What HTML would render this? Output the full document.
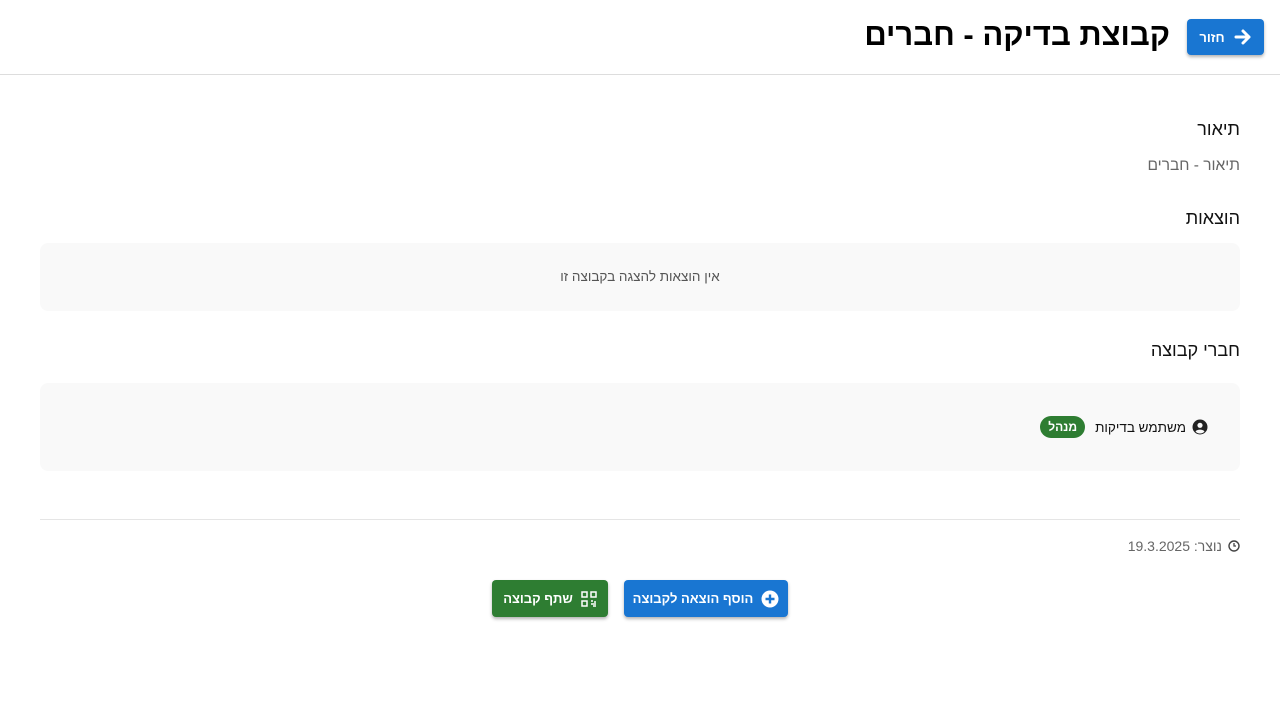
<!DOCTYPE html>
<html dir="rtl"><head><meta charset="utf-8"><style>
*{box-sizing:border-box;margin:0;padding:0}
body{width:1280px;height:720px;background:#fff;font-family:"Liberation Sans","Noto Sans CJK SC",sans-serif;color:#111;position:relative;overflow:hidden}
.hdr{position:absolute;top:0;left:0;right:0;height:75px;border-bottom:1px solid #ddd}
.back{position:absolute;right:16px;top:19px;width:77px;height:36px;background:#1976d2;border-radius:4px;color:#fff;font-weight:bold;font-size:13px;box-shadow:0 2px 3px rgba(0,0,0,.3);display:flex;align-items:center;justify-content:center;gap:9px}
h1{position:absolute;right:110px;top:17px;font-size:31px;font-weight:bold;color:#000}
.ab{position:absolute;right:40px}
h2{font-size:18px;font-weight:normal;color:#111}
.box{position:absolute;left:40px;right:40px;background:#f9f9f9;border-radius:8px}
.btn{position:absolute;top:580px;height:37px;border-radius:4px;color:#fff;font-weight:bold;font-size:13px;display:flex;align-items:center;justify-content:center;gap:8px;box-shadow:0 2px 3px rgba(0,0,0,.3)}
</style></head><body>
<div class="hdr">
<div class="back"><svg width="18" height="18" viewBox="0 0 18 18"><path d="M2 9h13M9 3l6 6-6 6" stroke="#fff" stroke-width="3" fill="none" stroke-linecap="round" stroke-linejoin="round"/></svg><span>חזור</span></div>
<h1>קבוצת בדיקה - חברים</h1>
</div>
<h2 class="ab" style="top:119px">תיאור</h2>
<div class="ab" style="top:157px;font-size:15.5px;color:#666">תיאור - חברים</div>
<h2 class="ab" style="top:208px">הוצאות</h2>
<div class="box" style="top:243px;height:68px;text-align:center;line-height:68px;font-size:13.5px;color:#555">אין הוצאות להצגה בקבוצה זו</div>
<h2 class="ab" style="top:340px">חברי קבוצה</h2>
<div class="box" style="top:383px;height:88px"></div>
<div style="position:absolute;right:72px;top:416px;display:flex;align-items:center;gap:6px;font-size:13.5px">
<svg width="16" height="16" viewBox="0 0 16 16"><circle cx="8" cy="8" r="7.5" fill="#222"/><circle cx="8" cy="6.3" r="2.6" fill="#f9f9f9"/><path d="M3.5 12.5c1.5-2.5 7.5-2.5 9 0a6 6 0 0 1-9 0z" fill="#f9f9f9"/></svg>
<span style="margin-left:2px">משתמש בדיקות</span>
<span style="background:#2e7d32;color:#fff;font-weight:bold;font-size:12px;border-radius:12px;padding:4px 8px;margin-right:2px">מנהל</span></div>
<div style="position:absolute;left:40px;right:40px;top:519px;border-top:1px solid #e5e5e5"></div>
<div style="position:absolute;right:40px;top:538px;font-size:14px;color:#666;display:flex;align-items:center;gap:6px">
<svg width="12" height="12" viewBox="0 0 12 12"><circle cx="6" cy="6" r="5" stroke="#444" stroke-width="1.4" fill="none"/><path d="M6 3v3h2" stroke="#444" stroke-width="1.3" fill="none"/></svg><span>נוצר: 19.3.2025</span></div>
<div class="btn" style="left:624px;width:164px;background:#1976d2"><svg width="18" height="18" viewBox="0 0 18 18"><circle cx="9" cy="9" r="8.5" fill="#fff"/><path d="M9 4.5v9M4.5 9h9" stroke="#1976d2" stroke-width="2.4"/></svg><span>הוסף הוצאה לקבוצה</span></div>
<div class="btn" style="left:492px;width:116px;background:#2e7d32"><svg width="16" height="16" viewBox="0 0 16 16" fill="none" stroke="#fff" stroke-width="1.5"><rect x="1" y="1" width="5" height="5"/><rect x="10" y="1" width="5" height="5"/><rect x="1" y="10" width="5" height="5"/><path d="M10 10h2M14 10v2M10 13h5M12 15h3" /></svg><span>שתף קבוצה</span></div>
</body></html>
